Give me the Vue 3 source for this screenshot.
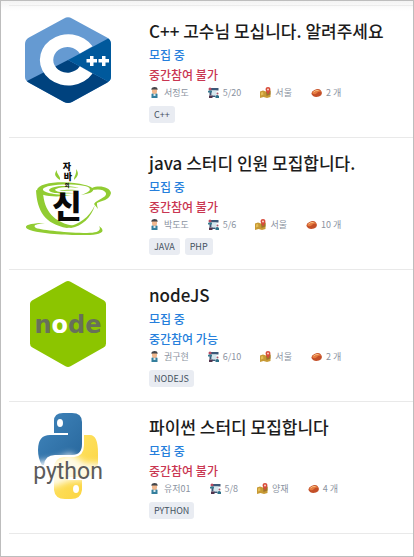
<script setup>
const studies = [
  { logo: 'cpp', title: 'C++ 고수님 모십니다. 알려주세요', open: false, join: '중간참여 불가', host: '서정도', members: '5/20', place: '서울', count: '2 개', tags: ['C++'] },
  { logo: 'java', title: 'java 스터디 인원 모집합니다.', open: false, join: '중간참여 불가', host: '박도도', members: '5/6', place: '서울', count: '10 개', tags: ['JAVA', 'PHP'] },
  { logo: 'node', title: 'nodeJS', open: true, join: '중간참여 가능', host: '권구현', members: '6/10', place: '서울', count: '2 개', tags: ['NODEJS'] },
  { logo: 'python', title: '파이썬 스터디 모집합니다', open: false, join: '중간참여 불가', host: '유저01', members: '5/8', place: '양재', count: '4 개', tags: ['PYTHON'] },
]
</script>

<template>
  <main class="page">
    <ul class="list">
      <li v-for="s in studies" :key="s.title" class="study">
        <svg v-if="s.logo === 'cpp'" class="logo" viewBox="0 0 86 86" aria-hidden="true">
          <defs>
            <clipPath id="cppHex"><path d="M39 1.4Q43-.8 47 1.4L82 20.5Q86 22.8 86 27V60Q86 63.500 82 65.700L47 85Q43 87 39 85L4 65.700Q0 63.500 0 60V27Q0 22.800 4 20.500Z" /></clipPath>
          </defs>
          <g clip-path="url(#cppHex)">
            <path fill="#659ad2" d="M0 0H86V86H0Z" />
            <path fill="#00427e" d="M0 65L43 43L86 66V86H0Z" />
            <path fill="#00599c" d="M43 43L86 20V66Z" />
          </g>
          <path fill="#fff" d="M67.500 29.300A28.500 25.600 0 1 0 67.500 56.500L54.800 49.200A14.200 12.800 0 1 1 54.800 36.600Z" />
          <path fill="#fff" d="M65 39h3.500v3H72v3.500h-3.500V49H65v-3.500h-3.500V42H65zM77 39h3.500v3H84v3.500h-3.500V49H77v-3.500h-3.500V42H77z" />
        </svg>

        <svg v-else-if="s.logo === 'java'" class="logo" viewBox="0 0 86 86" role="img" aria-label="자바의 신">
          <g fill="#91cc32">
            <path d="M11 41C12 62 20 75 42 79L50 77C29 74 19 62 18 43Z" />
            <path d="M60 36C42 31 13 33 12 41C12 47 31 49 46 46C28 46 17 43 18 40C20 36 42 34 60 37C68 39 66 43 56 46C71 44 72 39 60 36Z" />
            <path d="M54 39C39 35 25 38 24 41C25 45 39 45 50 44C32 44 28 41 31 40C39 37 49 39 54 39Z" />
            <path d="M34 42C43 40 50 41 55 42C49 41 41 42 34 42Z" />
            <path d="M67 39C74 36 85 38 86 44C85 51 76 52 72 54C72 56 72 57 73 60L69 55C72 50 82 49 81 44C79 40 73 40 67 41Z" />
            <path d="M70 56C66 69 57 77 46 79L42 78C54 75 64 69 70 56Z" />
            <path d="M20 74C2 74-6 78 8 82C25 86 50 86 61 86C78 86 81 82 74 77C77 82 72 84 62 84C43 84 17 81 11 79C7 76 12 75 20 74Z" />
            <path d="M32 21C31 25 36 27 35 31C31 28 28 26 32 21ZM51 20C55 25 52 28 49 31C49 27 52 25 51 20Z" />
          </g>
          <g class="brush" text-anchor="middle" fill="#090909">
            <text x="42" y="21" font-size="9">자</text>
            <text x="43" y="31" font-size="9">바</text>
            <text x="42" y="38" font-size="5">의</text>
            <text x="42" y="69" font-size="32">신</text>
          </g>
        </svg>

        <svg v-else-if="s.logo === 'node'" class="logo" viewBox="0 0 86 86" role="img" aria-label="node">
          <path fill="#8cc500" d="M40.500.8Q43-.8 45.500.8L79 19.500Q81 20.700 81 23V62.500Q81 65 79 66.200L45.500 85.200Q43 86.800 40.500 85.200L7 66.200Q5 65 5 62.500V23Q5 20.700 7 19.500Z" />
          <text class="nodeword" text-anchor="middle" x="43" y="52" font-size="24" fill="#68705a">n<tspan fill="#fff">o</tspan>de</text>
        </svg>

        <svg v-else class="logo" viewBox="0 0 86 86" role="img" aria-label="python">
          <defs>
            <linearGradient id="pyBlue" x2="1" y2="1"><stop stop-color="#4186bd" /><stop offset="1" stop-color="#27669b" /></linearGradient>
            <linearGradient id="pyYellow" x2="1" y2="1"><stop stop-color="#ffe873" /><stop offset="1" stop-color="#fbd137" /></linearGradient>
            <filter id="pyHaze" x="-20%" y="-40%" width="140%" height="180%"><feGaussianBlur stdDeviation="3" /></filter>
          </defs>
          <path fill="url(#pyBlue)" d="M29 20V8Q29 0 38 0H47Q57 0 57 9V31Q57 42 47 42H30Q20 42 19 52H17Q13 46 13 37Q13 22 25 22H43V20Z" />
          <path fill="url(#pyYellow)" d="M59 22H65Q73 22 73 40V50Q71 63 61 64H43V67H57V77Q56 86 46 86H40Q30 86 29 77V55Q29 45 39 44H49Q59 43 59 32Z" />
          <ellipse cx="35" cy="10" rx="3" ry="4" fill="#fff" />
          <ellipse cx="51" cy="76" rx="3" ry="4" fill="#fff" />
          <path fill="#fff" opacity=".85" filter="url(#pyHaze)" d="M10 49L30 46L45 40L60 50H77V65L60 67L44 68L28 74L10 67Z" />
          <text class="pyword" text-anchor="middle" x="43" y="66" font-size="23" fill="#5b5b5b">python</text>
        </svg>

        <div class="body">
          <h2 class="title">{{ s.title }}</h2>
          <p class="state">모집 중</p>
          <p class="state" :class="{ closed: !s.open }">{{ s.join }}</p>
          <div class="meta">
            <span class="item">
              <svg class="icon" viewBox="0 0 22 22" aria-hidden="true">
                <path fill="#347f9d" d="M5 22V15Q5 12 11 12Q17 12 17 15V22Z" />
                <path fill="#f0b88f" d="M6 4H16V10Q16 14 11 14Q6 14 6 10Z" />
                <path fill="#424449" d="M5 6V3Q6 0 11 0Q17 0 17 4V6L15 5H7Z" />
                <path fill="#d9e9ef" d="M9 14H13V18H9Z" />
              </svg>{{ s.host }}
            </span>
            <span class="item">
              <svg class="icon" viewBox="0 0 22 22" aria-hidden="true">
                <path fill="#3c5878" d="M5 2H21V7H5ZM3 9H7V17H3ZM8 17H15V20H8Z" />
                <path fill="#d5e7ee" d="M8 7H17V16H8Z" />
                <circle cx="4" cy="4" r="3" fill="#b94b61" />
                <path fill="#37798f" d="M0 8Q4 5 8 8V11H0Z" />
                <path fill="#53344c" d="M2 17H9V22H2Z" />
                <circle cx="19" cy="13" r="2" fill="#a8566a" />
                <path fill="#2c7088" d="M15 18Q18 14 22 18V22H15Z" />
              </svg>{{ s.members }}
            </span>
            <span class="item">
              <svg class="icon" viewBox="0 0 22 22" aria-hidden="true">
                <path fill="#c79a35" d="M0 9L6 7L12 9L21 7V20L14 22L7 20L0 22Z" />
                <path fill="#9d762b" d="M12 9L21 7V15L13 18Z" />
                <path fill="#e4be56" d="M2 11L6 10L7 15L2 17Z" />
                <path fill="#d84b3b" d="M16 15L12 8Q9 0 16 0Q23 0 20 8Z" />
                <circle cx="16" cy="5" r="2" fill="#f8d6c5" />
              </svg>{{ s.place }}
            </span>
            <span class="item">
              <svg class="icon" viewBox="0 0 22 22" aria-hidden="true">
                <path fill="#c34f28" d="M1 14Q0 9 7 6Q17 1 21 9Q24 16 16 19Q5 22 1 14Z" />
                <path fill="#e57b3f" d="M2 12Q4 8 10 6Q18 4 20 10Q15 8 12 12Q7 17 2 12Z" />
                <path fill="none" stroke="#f5bd83" stroke-width="2" d="M5 10Q9 6 15 7" />
              </svg>{{ s.count }}
            </span>
          </div>
          <ul class="tags">
            <li v-for="t in s.tags" :key="t" class="tag">{{ t }}</li>
          </ul>
        </div>
      </li>
    </ul>
  </main>
</template>

<style>
body {
  background: #fff;
}
</style>

<style scoped>
.page {
  box-sizing: border-box;
  min-height: 100vh;
  padding: 4px 0 0 8px;
  border: 1px solid #bdbdbd;
  background: linear-gradient(#f3f3f3, #fff 10px);
  font-family: "Noto Sans CJK KR", "Noto Sans", sans-serif;
}
.list,
.tags {
  margin: 0;
  padding: 0;
  list-style: none;
}
.list {
  border-top: 1px solid #ebebeb;
}
.study {
  display: flex;
  gap: 38px;
  padding: 11px 16px 14px;
  border-bottom: 1px solid #e9e9e9;
}
.logo {
  flex: none;
  width: 86px;
  height: 86px;
}
.brush {
  font-family: "Liberation Sans", "Noto Sans CJK KR", sans-serif;
  font-weight: 900;
}
.nodeword {
  font-family: "DejaVu Sans", sans-serif;
  font-weight: 700;
}
.pyword {
  font-family: Roboto, sans-serif;
  font-weight: 400;
}
.body {
  flex: 1;
  min-width: 0;
}
.title {
  margin: 0;
  font-size: 17px;
  font-weight: 500;
  line-height: 28px;
  color: #1c1c1c;
}
.state {
  margin: 0;
  font-size: 12px;
  font-weight: 500;
  line-height: 20px;
  color: #267fdc;
}
.state.closed {
  color: #c93651;
}
.meta {
  display: flex;
  gap: 19px;
  font-size: 9px;
  line-height: 15px;
  color: #8b93a1;
}
.item {
  display: flex;
  align-items: center;
  gap: 4px;
  white-space: nowrap;
}
.icon {
  width: 11px;
  height: 11px;
}
.tags {
  display: flex;
  gap: 5px;
  margin-top: 6px;
}
.tag {
  padding: 0 5px;
  border-radius: 3px;
  background: #e9ecf2;
  font-size: 9px;
  font-weight: 400;
  line-height: 17px;
  color: #46525f;
}
</style>
